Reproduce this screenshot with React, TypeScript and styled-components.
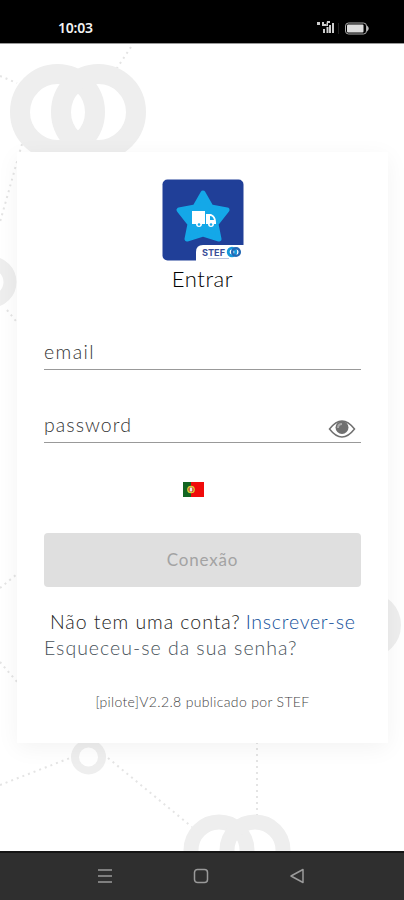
import React from "react";
import styled, { createGlobalStyle } from "styled-components";

const GlobalStyle = createGlobalStyle`
  * { box-sizing: border-box; }
  html, body { margin: 0; padding: 0; background: #fff; }
  body { font-family: Lato, "Open Sans", sans-serif; font-weight: 300; overflow: hidden; }
`;

const Screen = styled.div`
  width: 404px;
  height: 900px;
  display: flex;
  flex-direction: column;
  background: #fff;
`;

const StatusBar = styled.header`
  height: 43px;
  flex: none;
  display: flex;
  align-items: center;
  padding: 12px 33px 0 58px;
  background: #000;
  color: #f2f2f2;
`;

const Clock = styled.time`
  flex: 1;
  font: 600 14px/18px "Noto Sans", sans-serif;
  letter-spacing: -0.2px;
`;

const Main = styled.main`
  position: relative;
  flex: 1;
  padding: 108px 16px 0 17px;
  border-top: 1px solid #999;
  overflow: hidden;
`;

const Backdrop = styled.svg`
  position: absolute;
  inset: 0;
`;

const Card = styled.section`
  position: relative;
  height: 591px;
  padding: 27px 27px 0;
  display: flex;
  flex-direction: column;
  background: #fff;
  box-shadow: 0 5px 22px rgba(0, 0, 0, 0.05);
`;

const Logo = styled.svg`
  align-self: center;
  flex: none;
`;

const Title = styled.h1`
  margin: 3px 0 0;
  text-align: center;
  font-size: 22px;
  font-weight: 300;
  line-height: 30px;
  letter-spacing: 0.6px;
  color: #000;
`;

const Field = styled.label<{ $gap: number }>`
  margin-top: ${(p) => p.$gap}px;
  height: 36px;
  flex: none;
  display: flex;
  justify-content: space-between;
  border-bottom: 1px solid #999;
  color: #333;
`;

const Placeholder = styled.span<{ $spacing: number }>`
  font-size: 19.5px;
  line-height: 35px;
  letter-spacing: ${(p) => p.$spacing}px;
`;

const Eye = styled.svg`
  margin: 12px 5px 0 0;
`;

const Flag = styled.svg`
  align-self: center;
  flex: none;
  margin: 39px 18px 0 0;
`;

const Submit = styled.button`
  flex: none;
  margin: 36px 0 0;
  padding: 0 0 1px;
  height: 54px;
  border: 0;
  border-radius: 4px;
  background: #dfdfdf;
  color: #a3a3a3;
  font: 400 17px/24px Lato, sans-serif;
  letter-spacing: 0.8px;
`;

const Prompt = styled.p`
  margin: 22px 0 0 6px;
  display: flex;
  gap: 5px;
  font-size: 19.5px;
  line-height: 26px;
  color: #222;
  white-space: nowrap;
`;

const Phrase = styled.span`
  letter-spacing: 0.95px;
`;

const Link = styled.a`
  color: #12509a;
  letter-spacing: 0.75px;
`;

const Forgot = styled.a`
  font-size: 19.5px;
  line-height: 26px;
  color: #48525a;
  letter-spacing: 1px;
  white-space: nowrap;
`;

const Version = styled.small`
  margin-top: 31px;
  align-self: center;
  font-size: 14px;
  line-height: 20px;
  letter-spacing: 0.35px;
  color: #444;
  white-space: nowrap;
`;

const NavBar = styled.nav`
  height: 49px;
  flex: none;
  display: flex;
  justify-content: center;
  align-items: center;
  gap: 76px;
  padding: 0 2px 2px 0;
  background: #2f2f2f;
  border-top: 2px solid #151515;
`;

const NavIcon = styled.svg`
  width: 20px;
  height: 20px;
  fill: none;
  stroke: #9a9a9a;
  stroke-width: 1.5;
`;

function Network() {
  return (
    <Backdrop width="404" height="807" viewBox="0 44 404 807" fill="none">
      <path
        d="M131 47L115 71M0 76L17 83M22 144L0 222M7 310L60 375M0 588L44 552M0 662L30 697M0 785L70 758M108 758L192 827M257 742V820"
        stroke="#e4e4e4"
        strokeWidth="2"
        strokeDasharray="2 4"
      />
      <g stroke="#eeeeee">
        <g strokeWidth="20">
          <ellipse cx="57.500" cy="112" rx="37.500" ry="38" />
          <ellipse cx="98.500" cy="112" rx="37.500" ry="38" />
        </g>
        <circle cx="-9" cy="282" r="19" strokeWidth="13" />
        <circle cx="88.500" cy="757" r="13.500" strokeWidth="8" />
        <g strokeWidth="15">
          <circle cx="219" cy="850" r="28" />
          <circle cx="255" cy="850" r="28" />
        </g>
        <circle cx="368" cy="625" r="26" strokeWidth="14" />
      </g>
    </Backdrop>
  );
}

function AppLogo() {
  return (
    <Logo width="82" height="82" viewBox="0 0 82 82">
      <rect x=".5" y=".5" width="81" height="81" rx="5" fill="#203f98" />
      <path d="M41 14L49 28L65 31L54 45L57 60L41 55L25 60L28 45L17 31L33 28Z" fill="#14a8e8" stroke="#14a8e8" strokeWidth="5" strokeLinejoin="round" />
      <path d="M30 32H43V45H40A3 3 0 0 1 34 45H30ZM44 35H49Q54 37 54 43V45H52A3 3 0 0 1 46 45H44Z" fill="#fff" />
      <path d="M48 37V41H52Q51 37 48 37Z" fill="#14a8e8" />
      <circle cx="37" cy="45.500" r="1.300" fill="#14a8e8" />
      <circle cx="49" cy="45.500" r="1.300" fill="#14a8e8" />
      <path d="M34 82V73Q34 66 41 66H82V82Z" fill="#fff" />
      <text x="40" y="76.500" fontFamily="Inter, sans-serif" fontWeight="700" fontSize="9" textLength="23" lengthAdjust="spacingAndGlyphs" fill="#3a4f99">STEF</text>
      <path d="M46 79.500H67" stroke="#b9c3df" />
      <circle cx="70" cy="73" r="3.800" fill="none" stroke="#1598da" strokeWidth="2.800" />
      <circle cx="74" cy="73" r="3.800" fill="none" stroke="#2468b4" strokeWidth="2.500" />
    </Logo>
  );
}

export default function App() {
  return (
    <Screen>
      <GlobalStyle />
      <StatusBar>
        <Clock>10:03</Clock>
        <svg width="56" height="18" viewBox="0 0 56 18">
          <g fill="#ccc">
            <path d="M2 3H5V6H2ZM7 3H9V5H11V7H7ZM12 2H15V4H13V7H11ZM8 10H10V14H8ZM11.500 8H13.500V14H11.500ZM14 6H16V14H14ZM17 4H19V14H17Z" />
            <path d="M23 4H24V15H23Z" fill="#222" />
          </g>
          <rect x="30.500" y="4" width="21" height="11" rx="3" fill="none" stroke="#aaa" />
          <rect x="32" y="5.500" width="16.500" height="8" rx="1" fill="#ddd" />
          <path d="M52 6.500Q55.500 9.500 52 12.500Z" fill="#bbb" />
        </svg>
      </StatusBar>
      <Main>
        <Network />
        <Card>
          <AppLogo />
          <Title>Entrar</Title>
          <Field $gap={40}>
            <Placeholder $spacing={1.4}>email</Placeholder>
          </Field>
          <Field $gap={37}>
            <Placeholder $spacing={1.05}>password</Placeholder>
            <Eye width="28" height="20" viewBox="0 0 28 20">
              <path d="M1.500 10Q14-6 26.500 10Q14 26 1.500 10Z" fill="#fff" stroke="#707070" strokeWidth="1.500" />
              <circle cx="14" cy="8.500" r="6.500" fill="#707070" />
              <path d="M10 9Q10 5 14 5" fill="none" stroke="#aaa" strokeWidth="2" />
            </Eye>
          </Field>
          <Flag width="21" height="15" viewBox="0 0 21 15">
            <path d="M0 0H8V15H0Z" fill="#126522" />
            <path d="M8 0H21V15H8Z" fill="#f00b0b" />
            <circle cx="8" cy="7.500" r="3.200" fill="#c72b16" stroke="#d9cf38" strokeWidth="1.300" />
            <path d="M6.700 5.500H9.300V8.500L8 10L6.700 8.500Z" fill="#eee" />
          </Flag>
          <Submit>Conexão</Submit>
          <Prompt>
            <Phrase>Não tem uma conta?</Phrase>
            <Link>Inscrever-se</Link>
          </Prompt>
          <Forgot>Esqueceu-se da sua senha?</Forgot>
          <Version>[pilote]V2.2.8 publicado por STEF</Version>
        </Card>
      </Main>
      <NavBar>
        <NavIcon viewBox="0 0 20 20"><path d="M3 4H17M3 10H17M3 16H17" /></NavIcon>
        <NavIcon viewBox="0 0 20 20"><rect x="3.500" y="3.500" width="13" height="13" rx="3" /></NavIcon>
        <NavIcon viewBox="0 0 20 20"><path d="M16 3.500V16.500L4 10Z" strokeLinejoin="round" /></NavIcon>
      </NavBar>
    </Screen>
  );
}
